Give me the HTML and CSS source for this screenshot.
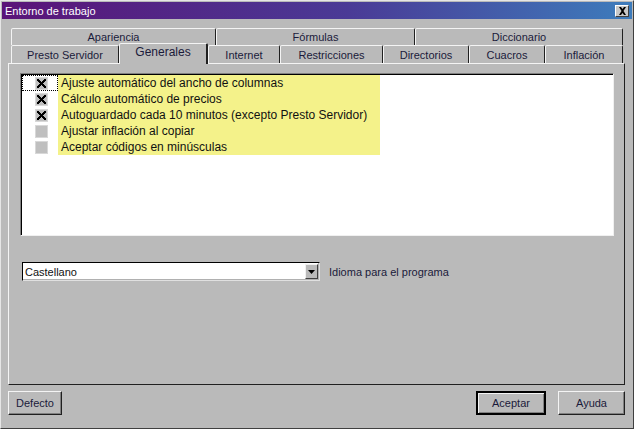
FILE: index.html
```html
<!DOCTYPE html>
<html>
<head>
    <link rel="stylesheet" href="styles.css">
</head>
<body>
<div class="window">
    <div class="titlebar">
        <span class="title">Entorno de trabajo</span>
        <span class="close">
            <svg width="9" height="8" viewBox="0 0 9 8"><path d="M1 0h2l1.5 2L6 0h2L5.5 4 8 8H6L4.5 6 3 8H1l2.5-4z" fill="#000"/></svg>
        </span>
    </div>
    <div class="tabs">
        <div class="tab-row back">
            <div class="tab" style="width: 205px">Apariencia</div>
            <div class="tab" style="width: 199px">Fórmulas</div>
            <div class="tab" style="width: 208px">Diccionario</div>
        </div>
        <div class="tab-row front">
            <div class="tab" style="width: 108px">Presto Servidor</div>
            <div class="tab active" style="width: 89px">Generales</div>
            <div class="tab" style="width: 72px">Internet</div>
            <div class="tab" style="width: 103px">Restricciones</div>
            <div class="tab" style="width: 86px">Directorios</div>
            <div class="tab" style="width: 76px">Cuacros</div>
            <div class="tab" style="width: 78px">Inflación</div>
        </div>
    </div>
    <div class="panel">
        <div class="listbox">
            <div class="item focus">
                <span class="check on"></span>
                <span class="label">Ajuste automático del ancho de columnas</span>
            </div>
            <div class="item">
                <span class="check on"></span>
                <span class="label">Cálculo automático de precios</span>
            </div>
            <div class="item">
                <span class="check on"></span>
                <span class="label">Autoguardado cada 10 minutos (excepto Presto Servidor)</span>
            </div>
            <div class="item">
                <span class="check"></span>
                <span class="label">Ajustar inflación al copiar</span>
            </div>
            <div class="item">
                <span class="check"></span>
                <span class="label">Aceptar códigos en minúsculas</span>
            </div>
        </div>
        <div class="lang">
            <div class="combo">
                <span class="value">Castellano</span>
                <span class="drop">
                    <svg width="7" height="4" viewBox="0 0 7 4"><path d="M0 0h7L3.5 4z" fill="#000"/></svg>
                </span>
            </div>
            <span class="lang-label">Idioma para el programa</span>
        </div>
    </div>
    <div class="buttons">
        <div class="btn" style="width: 54px">Defecto</div>
        <div class="spacer"></div>
        <div class="btn default" style="width: 70px">Aceptar</div>
        <div class="btn" style="width: 67px">Ayuda</div>
    </div>
</div>
</body>
</html>
```

FILE: styles.css
```css
body {
    margin: 0;
    background: #bababa;
}

.window {
    width: 634px;
    height: 429px;
    box-sizing: border-box;
    background: #bababa;
    border: 1px solid;
    border-color: #e6e6e6 #404040 #404040 #e6e6e6;
    padding: 1px;
    font-family: "Liberation Sans", Arial, sans-serif;
    font-size: 11px;
    color: #1a1a3a;
    display: flex;
    flex-direction: column;
}

.titlebar {
    height: 17px;
    background: linear-gradient(to right, #5a1478 0%, #4a3a96 55%, #3d7cbc 100%);
    display: flex;
    align-items: center;
    justify-content: space-between;
    padding: 0 3px;
}

.titlebar .title {
    color: #fff;
    font-size: 11px;
}

.close {
    width: 14px;
    height: 12px;
    box-sizing: border-box;
    background: #c8c8c8;
    border: 1px solid;
    border-color: #fff #404040 #404040 #fff;
    display: flex;
    align-items: center;
    justify-content: center;
}

.tabs {
    margin-top: 9px;
    padding-left: 9px;
}

.tab-row {
    display: flex;
}

.tab {
    box-sizing: border-box;
    height: 18px;
    border: 1px solid;
    border-bottom: none;
    border-color: #f4f4f4 #202020 transparent #f4f4f4;
    border-radius: 2px 2px 0 0;
    text-align: center;
    line-height: 18px;
    background: #bababa;
}

.tab-row.back .tab {
    height: 17px;
    line-height: 17px;
}

.tab-row.front {
    height: 18px;
    position: relative;
    z-index: 1;
}

.tab.active {
    height: 21px;
    margin-top: -2px;
    line-height: 16px;
    font-size: 12px;
    border-right-width: 2px;
}

.panel {
    margin: 0 7px 0 6px;
    height: 322px;
    box-sizing: border-box;
    border: 1px solid;
    border-color: #f4f4f4 #202020 #202020 #f4f4f4;
    padding: 9px 10px 0 11px;
}

.listbox {
    height: 163px;
    box-sizing: border-box;
    background: #fff;
    border: 1px solid;
    border-color: #808080 #f0f0f0 #f0f0f0 #808080;
    box-shadow: inset 1px 1px 0 #000;
    padding: 1px 0 0 1px;
    font-size: 12px;
    color: #111;
}

.item {
    display: flex;
    align-items: center;
    height: 16px;
    position: relative;
}

.item .check {
    width: 13px;
    height: 13px;
    margin-left: 13px;
    margin-right: 10px;
    background: #bfbfbf;
    box-sizing: border-box;
    border: 1px solid #d8d8d8;
    position: relative;
}

.item .check.on::after {
    content: "";
    position: absolute;
    left: 1px;
    top: 1px;
    width: 9px;
    height: 9px;
    background:
        linear-gradient(45deg, transparent 40%, #000 40%, #000 60%, transparent 60%),
        linear-gradient(-45deg, transparent 40%, #000 40%, #000 60%, transparent 60%);
}

.item.focus::after {
    content: "";
    position: absolute;
    left: 0;
    top: 0;
    width: 36px;
    height: 16px;
    box-sizing: border-box;
    border: 1px dotted #000;
}

.item .label {
    background: #f4f28a;
    width: 322px;
    height: 16px;
    line-height: 16px;
    padding-left: 3px;
    box-sizing: border-box;
}

.lang {
    display: flex;
    align-items: center;
    margin-top: 26px;
    padding-left: 2px;
}

.combo {
    width: 298px;
    height: 19px;
    box-sizing: border-box;
    background: #fff;
    border: 1px solid;
    border-color: #000 #e0e0e0 #e0e0e0 #000;
    box-shadow: inset -1px -1px 0 #b0b0b0;
    display: flex;
    align-items: center;
    justify-content: space-between;
    padding-left: 2px;
    font-size: 11px;
    color: #111;
}

.drop {
    width: 13px;
    height: 15px;
    box-sizing: border-box;
    margin-right: 1px;
    background: #bababa;
    border: 1px solid;
    border-color: #f0f0f0 #404040 #404040 #f0f0f0;
    display: flex;
    align-items: center;
    justify-content: center;
}

.lang-label {
    margin-left: 9px;
}

.buttons {
    display: flex;
    padding: 6px 7px 0 6px;
    gap: 12px;
}

.spacer {
    flex: 1;
}

.btn {
    height: 24px;
    box-sizing: border-box;
    border: 1px solid;
    border-color: #f4f4f4 #202020 #202020 #f4f4f4;
    box-shadow: inset -1px -1px 0 #808080;
    text-align: center;
    line-height: 22px;
}

.btn.default {
    border: 2px solid #000;
    box-shadow: inset 1px 1px 0 #f4f4f4, inset -1px -1px 0 #808080;
    line-height: 20px;
}
```
